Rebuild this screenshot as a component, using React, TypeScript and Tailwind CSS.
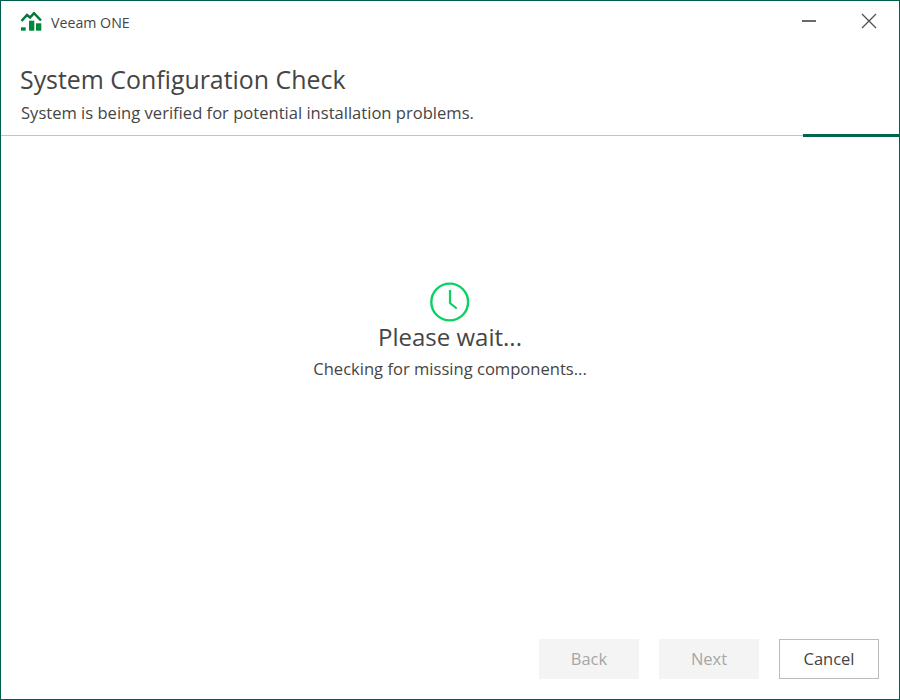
export default function App() {
  return (
    <div className="w-[900px] h-[700px] bg-white border border-[#005f4b] flex flex-col text-[#454545] overflow-hidden" style={{ fontFamily: '"Open Sans", "Noto Sans", sans-serif' }}>
      <div className="h-[44px] flex items-center shrink-0">
        <svg className="ml-[19px]" width="22" height="22" viewBox="20 12 22 22">
          <path d="M21.5 21 L27 15 L30 17.5 L34 13.2 L41 20.5" fill="none" stroke="#00783c" strokeWidth="2.5" />
          <rect x="21" y="27.3" width="4.7" height="3.4" fill="#00873c" />
          <rect x="29" y="20.7" width="5.3" height="10" fill="#00873c" />
          <rect x="36" y="23.3" width="5.3" height="7.4" fill="#00873c" />
        </svg>
        <span className="ml-[9px] text-[14.2px]">Veeam ONE</span>
        <div className="ml-auto flex items-center mb-[4px]">
          <div className="w-[14px] h-[2px] bg-[#6a6a6a] mr-[45px]" />
          <svg className="mr-[22px]" width="16" height="16" viewBox="0 0 16 16">
            <path d="M1 1 L15 15 M15 1 L1 15" stroke="#505050" strokeWidth="1.3" fill="none" />
          </svg>
        </div>
      </div>
      <div className="h-[91px] shrink-0 pl-[19px] flex flex-col border-b border-[#c4c4c4] relative">
        <div className="text-[24.9px] leading-[32px] mt-[18px]">System Configuration Check</div>
        <div className="text-[16.57px] leading-[22px] ml-px mt-[7px]">System is being verified for potential installation problems.</div>
        <div className="absolute right-0 bottom-[-2px] w-[96px] h-[3px] bg-[#00654f]" />
      </div>
      <div className="flex-1 flex flex-col items-center pt-[146px]">
        <svg width="40" height="40" viewBox="0 0 40 40">
          <circle cx="19.7" cy="20" r="18.4" fill="none" stroke="#0ad161" strokeWidth="2.4" />
          <path d="M20 8 V21 L26.7 26.5" fill="none" stroke="#0ad161" strokeWidth="2.2" />
        </svg>
        <div className="text-[24px] leading-[32px] mt-[-1px]">Please wait...</div>
        <div className="text-[16.57px] leading-[22px] mt-[5px]">Checking for missing components...</div>
      </div>
      <div className="flex justify-end gap-[20px] pr-[20px] pb-[20px] shrink-0 text-[16.5px]">
        <div className="w-[100px] h-[40px] pt-px bg-[#f4f4f4] text-[#a6a6a6] flex items-center justify-center">Back</div>
        <div className="w-[100px] h-[40px] pt-px bg-[#f4f4f4] text-[#a6a6a6] flex items-center justify-center">Next</div>
        <div className="w-[100px] h-[40px] pt-px border border-[#bcbcbc] flex items-center justify-center">Cancel</div>
      </div>
    </div>
  );
}
